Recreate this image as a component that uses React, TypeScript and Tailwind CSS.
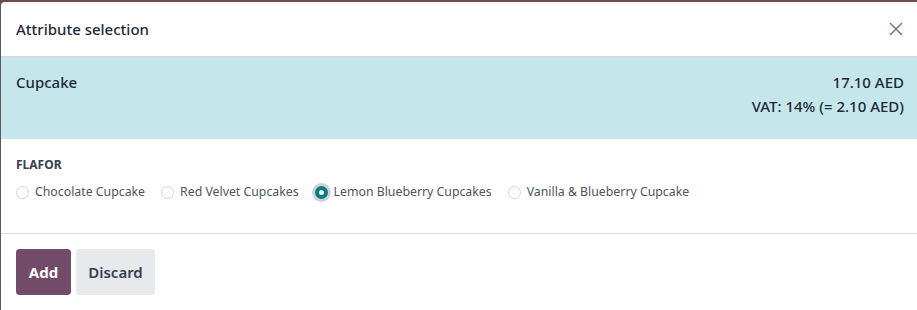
import { FC } from "react";

const options = [
	{ label: "Chocolate Cupcake", checked: false },
	{ label: "Red Velvet Cupcakes", checked: false },
	{ label: "Lemon Blueberry Cupcakes", checked: true },
	{ label: "Vanilla & Blueberry Cupcake", checked: false },
];

const Radio: FC<{ checked: boolean }> = ({ checked }) =>
	checked ? (
		<span className="flex items-center justify-center w-[13px] h-[13px] rounded-full bg-[#017e84] shadow-[0_0_0_3px_#d8cfd6]">
			<span className="w-[5px] h-[5px] rounded-full bg-white"></span>
		</span>
	) : (
		<span className="w-[13px] h-[13px] rounded-full border border-[#d1d5db] bg-white"></span>
	);

const App: FC = () => {
	return (
		<div className="w-[917px] h-[310px] bg-[#5a5a5a] pt-[2px] pl-[1px] overflow-hidden font-['Noto_Sans',sans-serif] text-[#1f2937]">
			<div className="absolute top-0 left-0 w-[917px] h-[2px] bg-[#6e4a4c]"></div>
			<div className="h-[330px] bg-white rounded-tl-[4px] flex flex-col">
				<div className="h-[55px] flex items-center justify-between pl-[15px] pr-[13px] border-b border-[#d8dadd]">
					<h4 className="text-[15px] font-medium">Attribute selection</h4>
					<svg width="16" height="16" viewBox="0 0 16 16" className="text-[#6b7280]">
						<path d="M2 2 L14 14 M14 2 L2 14" stroke="currentColor" strokeWidth="1.4" />
					</svg>
				</div>
				<div className="h-[82px] bg-[#c5e7eb] flex justify-between pl-[15px] pr-[13px] pt-[14px]">
					<div className="text-[15px] font-medium">Cupcake</div>
					<div className="text-[15px] font-medium text-right leading-[24px] -mt-[1px]">
						<div>17.10 AED</div>
						<div>VAT: 14% (= 2.10 AED)</div>
					</div>
				</div>
				<div className="h-[95px] border-b border-[#d8dadd] pl-[15px] pt-[17px]">
					<div className="text-[12px] font-bold text-[#374151] uppercase">Flafor</div>
					<div className="flex items-center gap-[16px] mt-[9px]">
						{options.map(o => (
							<label key={o.label} className="flex items-center gap-[6px] text-[12.3px] text-[#4b5563]">
								<Radio checked={o.checked} />
								<span>{o.label}</span>
							</label>
						))}
					</div>
				</div>
				<div className="flex gap-[5px] pl-[15px] pt-[15px]">
					<button className="h-[46px] w-[55px] rounded-[4px] bg-[#714b67] text-white text-[15px] font-bold">Add</button>
					<button className="h-[46px] w-[79px] rounded-[4px] bg-[#e7e9ed] text-[#374151] text-[15px] font-semibold">
						Discard
					</button>
				</div>
			</div>
		</div>
	);
};

export default App;
